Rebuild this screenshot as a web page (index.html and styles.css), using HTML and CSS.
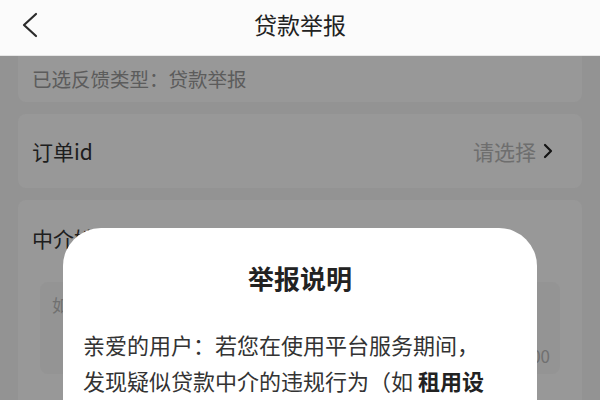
FILE: index.html
```html
<!DOCTYPE html>
<html lang="zh-CN">
<head>
<meta charset="utf-8">
<link rel="stylesheet" href="styles.css">
</head>
<body>
<div class="page">
  <header class="topbar">
    <svg class="back" width="20" height="30" viewBox="0 0 20 30"><polyline points="15,2 3,13 15,24" fill="none" stroke="#2b2b2b" stroke-width="2.2" stroke-linecap="round" stroke-linejoin="round"/></svg>
    <div class="title">贷款举报</div>
  </header>
  <main class="content">
    <div class="card card-type">已选反馈类型：贷款举报</div>
    <div class="card card-order">
      <span class="label">订单id</span>
      <span class="pick">请选择
        <svg width="12" height="18" viewBox="0 0 12 18"><polyline points="3,3 9,9 3,15" fill="none" stroke="#222" stroke-width="2.2" stroke-linecap="round" stroke-linejoin="round"/></svg>
      </span>
    </div>
    <div class="card card-agent">
      <div class="label">中介姓名</div>
      <div class="inputbox">
        <div class="placeholder">如实填写中介信息</div>
        <div class="counter">0/200</div>
      </div>
    </div>
  </main>
  <div class="mask"></div>
  <div class="modal">
    <div class="modal-title">举报说明</div>
    <p class="modal-text">亲爱的用户：若您在使用平台服务期间，发现疑似贷款中介的违规行为（如 <b>租用设备、收取前期费用、冒充平台工作人员</b>等），请及时向我们举报。</p>
  </div>
</div>
</body>
</html>
```
FILE: styles.css
```css
* { box-sizing: border-box; margin: 0; padding: 0; }
html, body { width: 600px; height: 400px; overflow: hidden; }
body {
  font-family: "Noto Sans CJK SC", "Noto Sans", sans-serif;
  background: #f5f5f5;
  color: #222;
}
.page { position: relative; width: 600px; height: 400px; overflow: hidden; }
.topbar {
  position: relative;
  z-index: 3;
  height: 56px;
  background: #fbfbfb;
  border-bottom: 1px solid #e6e6e6;
  display: flex;
  align-items: center;
  justify-content: center;
}
.back { position: absolute; left: 21px; top: 12px; }
.title { font-size: 23px; color: #222; line-height: 30px; margin-top: -8px; }
.content { padding: 0 18px; display: flex; flex-direction: column; }
.card { background: #fdfdfd; border-radius: 8px; }
.card-type {
  height: 48px;
  border-radius: 0 0 8px 8px;
  padding-left: 14px;
  display: flex; align-items: center;
  font-size: 19.5px; color: #999;
  margin-top: -2px;
}
.card-order {
  margin-top: 12px;
  height: 74px;
  padding: 0 28px 0 14px;
  display: flex; align-items: center; justify-content: space-between;
}
.label { font-size: 21px; color: #333; }
.pick { font-size: 21px; color: #b8b8b8; display: flex; align-items: center; gap: 6px; }
.card-agent {
  margin-top: 12px;
  height: 220px;
  padding: 22px 22px 0 14px;
}
.card-agent .label { line-height: 32px; }
.inputbox {
  margin-top: 28px;
  margin-left: 8px;
  background: #f7f7f7;
  border-radius: 8px;
  height: 92px;
  padding: 10px 12px;
  position: relative;
}
.placeholder { font-size: 17px; color: #bbb; line-height: 26px; }
.counter { position: absolute; right: 10px; bottom: 6px; font-size: 17px; color: #bbb; }
.mask { position: absolute; inset: 0; z-index: 1; background: rgba(0,0,0,0.4); }
.modal {
  position: absolute;
  z-index: 2;
  left: 63px; top: 228px;
  width: 474px; height: 320px;
  background: #fff;
  border-radius: 38px;
  padding: 32px 44px 0 20px;
}
.modal-title { text-align: center; font-size: 26px; font-weight: bold; line-height: 36px; color: #222; padding-left: 24px; }
.modal-text { margin-top: 30px; font-size: 22px; line-height: 36px; color: #333; }
.modal-text b { color: #222; }
```
